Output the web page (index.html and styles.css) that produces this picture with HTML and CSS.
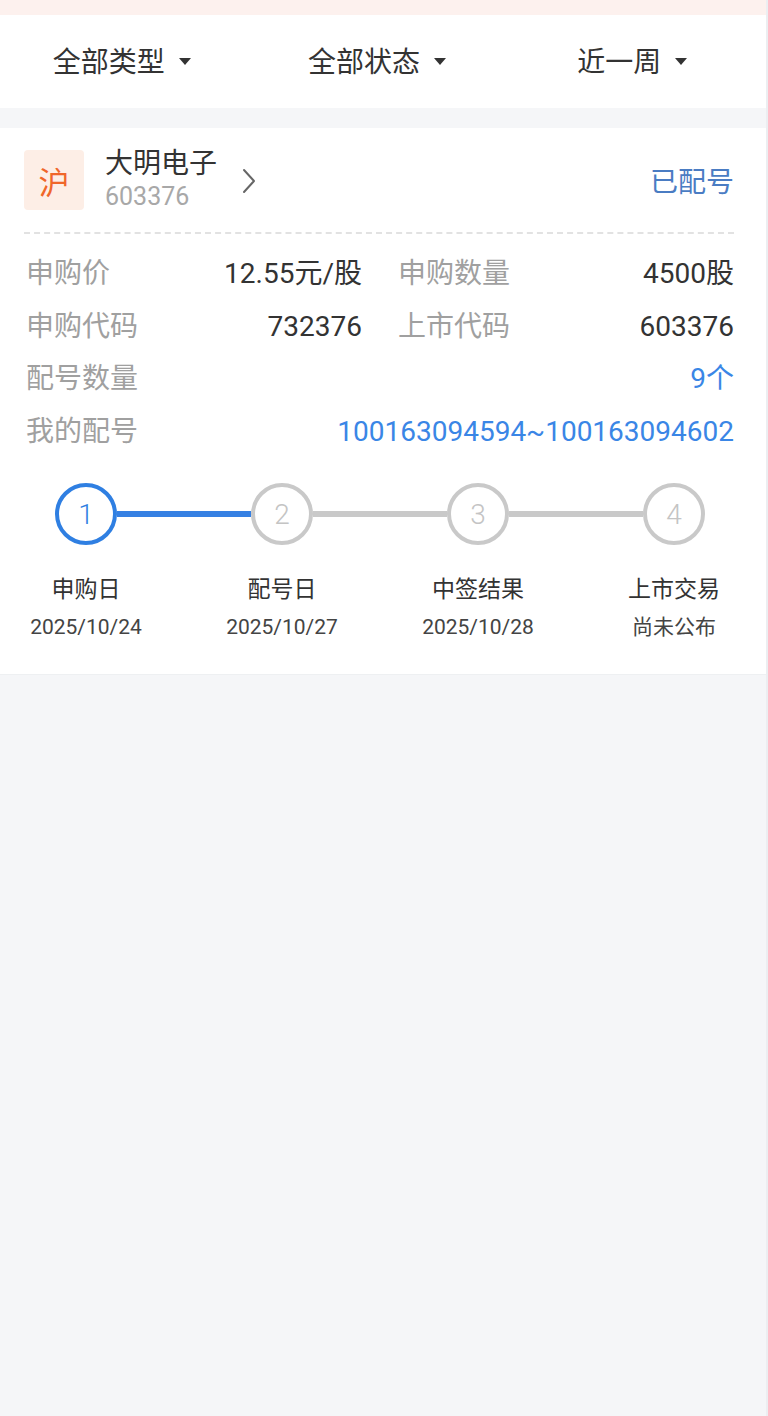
FILE: index.html
```html
<!DOCTYPE html>
<html>
<head>
<meta name="viewport" content="width=device-width, initial-scale=1.0">
<title>新股申购记录</title>
<link rel="stylesheet" href="styles.css">
</head>
<body>
<div class="page">
  <div class="top-strip"></div>

  <!-- filter bar -->
  <div class="filters">
    <div class="filter"><span>全部类型</span><i class="caret"></i></div>
    <div class="filter"><span>全部状态</span><i class="caret"></i></div>
    <div class="filter"><span>近一周</span><i class="caret"></i></div>
  </div>

  <div class="card">
    <div class="card-head">
      <div class="market">沪</div>
      <div class="stock">
        <div class="stock-name">大明电子</div>
        <div class="stock-code">603376</div>
      </div>
      <svg class="chevron" width="16" height="26" viewBox="0 0 16 26">
        <path d="M3 2 L13 13 L3 24" fill="none" stroke="#666" stroke-width="2" stroke-linecap="round" stroke-linejoin="round"/>
      </svg>
      <div class="status">已配号</div>
    </div>

    <div class="info">
      <div class="info-row">
        <div class="pair"><span class="label">申购价</span><span class="value">12.55元/股</span></div>
        <div class="pair"><span class="label">申购数量</span><span class="value">4500股</span></div>
      </div>
      <div class="info-row">
        <div class="pair"><span class="label">申购代码</span><span class="value">732376</span></div>
        <div class="pair"><span class="label">上市代码</span><span class="value">603376</span></div>
      </div>
      <div class="info-row">
        <div class="pair wide"><span class="label">配号数量</span><span class="value blue">9个</span></div>
      </div>
      <div class="info-row">
        <div class="pair wide"><span class="label">我的配号</span><span class="value blue">100163094594~100163094602</span></div>
      </div>
    </div>

    <!-- progress -->
    <div class="track">
      <div class="dot active">1</div>
      <div class="bar active"></div>
      <div class="dot">2</div>
      <div class="bar"></div>
      <div class="dot">3</div>
      <div class="bar"></div>
      <div class="dot">4</div>
    </div>
    <div class="steps">
      <div class="step"><div class="step-name">申购日</div><div class="step-date">2025/10/24</div></div>
      <div class="step"><div class="step-name">配号日</div><div class="step-date">2025/10/27</div></div>
      <div class="step"><div class="step-name">中签结果</div><div class="step-date">2025/10/28</div></div>
      <div class="step"><div class="step-name">上市交易</div><div class="step-date">尚未公布</div></div>
    </div>
  </div>
</div>
</body>
</html>
```

FILE: styles.css
```css
* {box-sizing: border-box;}

html, body {
  margin: 0;
  padding: 0;
  background: #f5f6f8;
}

body {
  font-family: Roboto, "Noto Sans CJK SC", sans-serif;
  color: #333;
}

.page {
  min-height: 1416px;
  border-right: 2px solid #eceef1;
}

.top-strip {
  height: 15px;
  background: #fdf1ee;
}

/* filter bar */
.filters {
  display: flex;
  height: 93px;
  background: #fff;
  margin-bottom: 20px;
}

.filter {
  flex: 1;
  display: flex;
  align-items: center;
  justify-content: center;
  padding-right: 12px;
  padding-bottom: 3px;
  font-size: 28px;
  color: #333;
}

.caret {
  width: 0;
  height: 0;
  margin-left: 14px;
  margin-top: 3px;
  border-left: 6px solid transparent;
  border-right: 6px solid transparent;
  border-top: 7px solid #333;
}

/* card */
.card {
  background: #fff;
  padding: 22px 32px 0 24px;
  height: 547px;
  border-bottom: 1px solid #eef0f2;
}

.card-head {
  display: flex;
  align-items: center;
  height: 60px;
}

.market {
  width: 60px;
  height: 60px;
  border-radius: 4px;
  background: #fdeee6;
  color: #f0662a;
  font-size: 31px;
  display: flex;
  align-items: center;
  justify-content: center;
}

.stock {
  margin-left: 21px;
  margin-top: 4px;
}

.stock-name {
  font-size: 28px;
  line-height: 30px;
  color: #333;
}

.stock-code {
  font-size: 25px;
  line-height: 36px;
  color: #a8a8a8;
}

.chevron {
  margin-left: 24px;
  margin-top: 2px;
}

.status {
  margin-left: auto;
  font-size: 28px;
  color: #4a7cc3;
}

.info {
  margin-top: 22px;
  border-top: 2px dashed #e2e2e2;
  padding-top: 11px;
}

.info-row {
  display: flex;
  gap: 34px;
  height: 52.5px;
  align-items: center;
}

.pair {
  flex: 1;
  display: flex;
  align-items: baseline;
  justify-content: space-between;
  font-size: 28px;
}

.label {
  color: #a0a0a0;
  padding-left: 2px;
}

.value {
  color: #333;
}

.value.blue {
  color: #3a86e6;
}

/* progress track */
.track {
  display: flex;
  align-items: center;
  margin-top: 28px;
  padding: 0 29px 0 31px;
}

.dot {
  width: 62px;
  height: 62px;
  flex: none;
  border-radius: 50%;
  border: 4px solid #c9c9c9;
  color: #c4c4c4;
  font-size: 28px;
  font-weight: 300;
  display: flex;
  align-items: center;
  justify-content: center;
}

.dot.active {
  border-color: #2f7fe2;
  color: #2f7fe2;
}

.bar {
  flex: 1;
  height: 6px;
  background: #c9c9c9;
}

.bar.active {
  background: #3580e3;
}

.steps {
  display: flex;
  justify-content: space-between;
  padding-left: 2px;
  margin-top: 28px;
}

.step {
  width: 120px;
  text-align: center;
}

.step-name {
  font-size: 23px;
  line-height: 34px;
  color: #333;
}

.step-date {
  font-size: 21px;
  line-height: 40px;
  color: #444;
}
```
